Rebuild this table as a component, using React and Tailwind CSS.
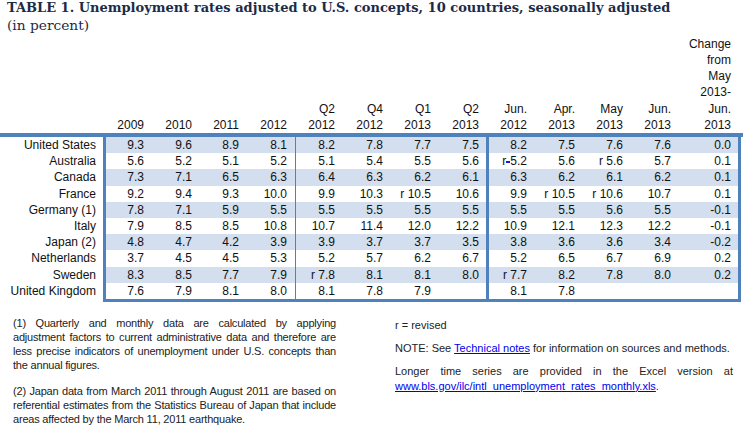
const rows = [
  ['United States', '9.3', '9.6', '8.9', '8.1', '8.2', '7.8', '7.7', '7.5', '8.2', '7.5', '7.6', '7.6', '0.0'],
  ['Australia', '5.6', '5.2', '5.1', '5.2', '5.1', '5.4', '5.5', '5.6', 'r-5.2', '5.6', 'r 5.6', '5.7', '0.1'],
  ['Canada', '7.3', '7.1', '6.5', '6.3', '6.4', '6.3', '6.2', '6.1', '6.3', '6.2', '6.1', '6.2', '0.1'],
  ['France', '9.2', '9.4', '9.3', '10.0', '9.9', '10.3', 'r 10.5', '10.6', '9.9', 'r 10.5', 'r 10.6', '10.7', '0.1'],
  ['Germany (1)', '7.8', '7.1', '5.9', '5.5', '5.5', '5.5', '5.5', '5.5', '5.5', '5.5', '5.6', '5.5', '-0.1'],
  ['Italy', '7.9', '8.5', '8.5', '10.8', '10.7', '11.4', '12.0', '12.2', '10.9', '12.1', '12.3', '12.2', '-0.1'],
  ['Japan (2)', '4.8', '4.7', '4.2', '3.9', '3.9', '3.7', '3.7', '3.5', '3.8', '3.6', '3.6', '3.4', '-0.2'],
  ['Netherlands', '3.7', '4.5', '4.5', '5.3', '5.2', '5.7', '6.2', '6.7', '5.2', '6.5', '6.7', '6.9', '0.2'],
  ['Sweden', '8.3', '8.5', '7.7', '7.9', 'r 7.8', '8.1', '8.1', '8.0', 'r 7.7', '8.2', '7.8', '8.0', '0.2'],
  ['United Kingdom', '7.6', '7.9', '8.1', '8.0', '8.1', '7.8', '7.9', '', '8.1', '7.8', '', '', ''],
]

const headers = [
  ['2009'], ['2010'], ['2011'], ['2012'],
  ['Q2', '2012'], ['Q4', '2012'], ['Q1', '2013'], ['Q2', '2013'],
  ['Jun.', '2012'], ['Apr.', '2013'], ['May', '2013'], ['Jun.', '2013'],
  ['Change', 'from', 'May', '2013-', 'Jun.', '2013'],
]

// cell classes per column: thin rule after 2012, heavy rule after Q2 2013
const cellCls = [
  'pr-2', 'pr-2', 'pr-2', 'pr-2 border-r',
  'pr-2', 'pr-2', 'pr-2', 'pr-[7px] border-r-[3px]',
  'pr-2', 'pr-2', 'pr-2', 'pr-2', 'pr-[7px]',
]

const grid = 'grid grid-cols-[46px_48px_47px_49px_47px_48px_48px_50px_46px_48px_48px_48px_59px]'
const just = '[text-align-last:justify] text-justify whitespace-nowrap'

function Value({ v }) {
  if (v === 'r-5.2') {
    return (
      <span>
        r<span className="inline-block w-[4px] h-[2px] bg-[#1a1acc] align-middle mb-[1px]"></span>5.2
      </span>
    )
  }
  return <span>{v}</span>
}

export default function App() {
  return (
    <div className="w-[743px] h-[428px] bg-white overflow-hidden text-[#111]">
      <div className="pl-[7px] font-['DejaVu_Serif',serif] text-[#1c2b48]">
        <div className="text-[13px] font-bold leading-[16px]">
          TABLE 1. Unemployment rates adjusted to U.S. concepts, 10 countries, seasonally adjusted
        </div>
        <div className="text-[13.75px] leading-[19px]">(in percent)</div>
      </div>

      <div className="font-['Liberation_Sans',Arial,sans-serif] text-[12px]">
        <div className="flex h-[98px]">
          <div className="w-[106px] shrink-0"></div>
          <div className={grid}>
            {headers.map((h, i) => (
              <div key={i} className={`flex flex-col justify-end items-end border-transparent leading-[16.2px] ${cellCls[i]}`}>
                {h.map((t, j) => <div key={j}>{t}</div>)}
              </div>
            ))}
          </div>
        </div>

        <div className="h-[4px] bg-[#4f81bd]"></div>

        <div className="flex">
          <div className="w-[103px] shrink-0">
            {rows.map(r => (
              <div key={r[0]} className="h-[16.2px] leading-[16.2px] text-right pr-[7px] whitespace-nowrap">{r[0]}</div>
            ))}
          </div>
          <div className="w-[638px] border-x-[3px] border-b-[3px] border-[#4f81bd]">
            {rows.map((r, ri) => (
              <div key={r[0]} className={`${grid} h-[16.2px] leading-[16.2px] ${ri % 2 === 0 ? 'bg-[#d3dfee]' : 'bg-white'}`}>
                {r.slice(1).map((v, i) => (
                  <div key={i} className={`text-right whitespace-nowrap border-[#4f81bd] ${cellCls[i]}`}>
                    <Value v={v} />
                  </div>
                ))}
              </div>
            ))}
          </div>
        </div>
      </div>

      <div className="flex pt-[14px] font-['Liberation_Sans',Arial,sans-serif] text-[11px] leading-[14px] text-[#222]">
        <div className="ml-[13px] w-[323px] tracking-[-0.2px]">
          <div className={just}>(1) Quarterly and monthly data are calculated by applying</div>
          <div className={just}>adjustment factors to current administrative data and therefore are</div>
          <div className={just}>less precise indicators of unemployment under U.S. concepts than</div>
          <div>the annual figures.</div>
          <div className={`mt-[12px] ${just}`}>(2) Japan data from March 2011 through August 2011 are based on</div>
          <div className={just}>referential estimates from the Statistics Bureau of Japan that include</div>
          <div>areas affected by the March 11, 2011 earthquake.</div>
        </div>
        <div className="ml-[59px] w-[338px]">
          <div className="mt-[2px]">r = revised</div>
          <div className="mt-[9px] whitespace-nowrap">
            NOTE: See <span className="text-[#0000ee] underline">Technical notes</span> for information on sources and methods.
          </div>
          <div className={`mt-[9px] ${just}`}>Longer time series are provided in the Excel version at</div>
          <div className="mt-[1px]">
            <span className="text-[#0000ee] underline">www.bls.gov/ilc/intl_unemployment_rates_monthly.xls</span>.
          </div>
        </div>
      </div>
    </div>
  )
}
